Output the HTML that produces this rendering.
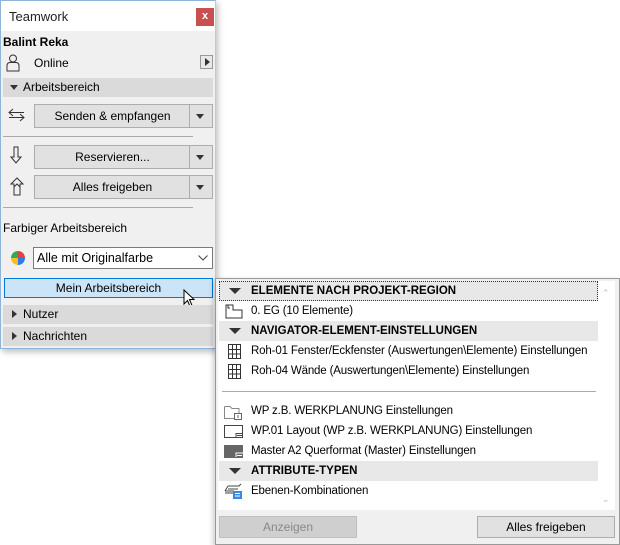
<!DOCTYPE html><html><head><style>
body{margin:0;width:620px;height:545px;background:#fff;font-family:"Liberation Sans",sans-serif;font-size:12px;color:#000;position:relative;overflow:hidden}
.a{position:absolute;white-space:nowrap}
.btn{position:absolute;background:#e1e1e1;border:1px solid #adadad;box-sizing:border-box;text-align:center;line-height:21px}
.dd{position:absolute;right:0;top:0;width:22px;height:100%;border-left:1px solid #adadad}
.dd:after{content:"";position:absolute;left:6px;top:9px;border:4px solid transparent;border-top:5px solid #333}
.bar{position:absolute;left:3px;width:210px;height:19px;background:#dadada;line-height:19px}
.tri{position:absolute;left:7px;top:7px;border:4px solid transparent;border-top:5px solid #333}
.trir{position:absolute;left:9px;top:5px;border:4px solid transparent;border-left:5px solid #333}
.hdr{position:absolute;left:219px;width:379px;height:20px;background:#e8e8e8;font-weight:bold;line-height:20px;white-space:nowrap;font-size:11.5px}
.hdr span,.it span{position:absolute;left:32px}
.hdr .tri{left:10px;top:7px;border-width:5px 6px;border-top-width:6px}
.it{position:absolute;left:219px;width:379px;height:20px;line-height:20px;white-space:nowrap;font-size:11.5px;letter-spacing:-0.15px}
</style></head><body>
<div class="a" style="left:0;top:0;width:216px;height:349px;background:#f0f0f0;border:1px solid #8fb3d9;border-right-color:#c8c8c8;box-sizing:border-box;box-shadow:2px 3px 6px rgba(0,0,0,.25)"></div>
<div class="a" style="left:1px;top:1px;width:214px;height:30px;background:#fff"></div>
<div class="a" style="left:9px;top:9px;font-size:13px;color:#222">Teamwork</div>
<div class="a" style="left:196px;top:8px;width:18px;height:18px;background:#c75050;color:#fff;font-size:11px;text-align:center;line-height:17px;font-weight:bold">x</div>
<div class="a" style="left:3px;top:35px;font-weight:bold">Balint Reka</div>
<svg class="a" style="left:6px;top:54px" width="14" height="18"><circle cx="7" cy="4.5" r="3.5" fill="none" stroke="#333"/><path d="M1 17V12Q1 8.5 4 8.5H10Q13 8.5 13 12V17Z" fill="none" stroke="#333"/></svg>
<div class="a" style="left:34px;top:56px">Online</div>
<div class="a" style="left:200px;top:55px;width:13px;height:14px;border:1px solid #999;background:#e8e8e8;box-sizing:border-box"><div style="position:absolute;left:4px;top:2px;border-width:4px 0 4px 5px;border-style:solid;border-color:transparent transparent transparent #333"></div></div>
<div class="bar" style="top:78px"><div class="tri"></div><span style="margin-left:20px">Arbeitsbereich</span></div>
<svg class="a" style="left:8px;top:107px" width="18" height="16"><path d="M5 2L1 5.5L5 9M1 5.5H16M12 7L16 10.5L12 14M16 10.5H1" fill="none" stroke="#333"/></svg>
<div class="btn" style="left:34px;top:104px;width:179px;height:24px;line-height:22px"><span style="margin-right:22px">Senden &amp; empfangen</span><div class="dd"></div></div>
<div class="a" style="left:3px;top:136px;width:190px;height:1px;background:#aaa"></div>
<svg class="a" style="left:10px;top:146px" width="12" height="18"><path d="M4 1H8V11H11L6 17L1 11H4Z" fill="none" stroke="#333"/></svg>
<div class="btn" style="left:34px;top:145px;width:179px;height:24px;line-height:22px"><span style="margin-right:22px">Reservieren...</span><div class="dd"></div></div>
<svg class="a" style="left:9px;top:177px" width="16" height="19"><path d="M2 7L8 1L14 7H11V18H5V7Z M5 10L8 7L11 10" fill="none" stroke="#333"/></svg>
<div class="btn" style="left:34px;top:175px;width:179px;height:24px;line-height:22px"><span style="margin-right:22px">Alles freigeben</span><div class="dd"></div></div>
<div class="a" style="left:3px;top:207px;width:190px;height:1px;background:#aaa"></div>
<div class="a" style="left:3px;top:221px">Farbiger Arbeitsbereich</div>
<svg class="a" style="left:10px;top:250px" width="16" height="16"><path d="M8 8V1A7 7 0 0 1 15 8Z" fill="#e8413b"/><path d="M8 8H15A7 7 0 0 1 8 15Z" fill="#2a7de1"/><path d="M8 8V15A7 7 0 0 1 1 8Z" fill="#f4c01e"/><path d="M8 8H1A7 7 0 0 1 8 1Z" fill="#34a853"/></svg>
<div class="a" style="left:33px;top:247px;width:180px;height:22px;background:#fff;border:1px solid #7a7a7a;box-sizing:border-box;line-height:20px;padding-left:3px;font-size:12.5px">Alle mit Originalfarbe<svg class="a" style="right:4px;top:7px" width="10" height="6"><path d="M0.5 0.5L5 5L9.5 0.5" fill="none" stroke="#444"/></svg></div>
<div class="a" style="left:4px;top:278px;width:209px;height:20px;background:#cce4f7;border:1px solid #0078d7;box-sizing:border-box;text-align:center;line-height:18px">Mein Arbeitsbereich</div>
<svg class="a" style="left:183px;top:289px" width="13" height="20"><path d="M1 1V15L4.5 11.5L7 17.5L9 16.5L6.5 10.5H11Z" fill="#fff" stroke="#000"/></svg>
<div class="bar" style="top:305px"><div class="trir"></div><span style="margin-left:20px">Nutzer</span></div>
<div class="bar" style="top:327px"><div class="trir"></div><span style="margin-left:20px">Nachrichten</span></div>

<div class="a" style="left:215px;top:278px;width:405px;height:267px;background:#f0f0f0;border:1px solid #999;box-sizing:border-box;box-shadow:-2px 2px 5px rgba(0,0,0,.2)"></div>
<div class="a" style="left:218px;top:281px;width:397px;height:229px;background:#fff"></div>
<div class="hdr" style="top:281px;outline:1px dotted #333;outline-offset:-1px"><div class="tri"></div><span>ELEMENTE NACH PROJEKT-REGION</span></div>
<div class="it" style="top:301px"><svg class="a" style="left:6px;top:3px" width="18" height="15"><path d="M1 1V14H17V6H8V1Z M3 1V4H5" fill="none" stroke="#333"/></svg><span>0. EG (10 Elemente)</span></div>
<div class="hdr" style="top:321px"><div class="tri"></div><span>NAVIGATOR-ELEMENT-EINSTELLUNGEN</span></div>
<div class="it" style="top:341px"><svg class="a" style="left:9px;top:3px" width="13" height="15"><path d="M.5 .5H12.5V14.5H.5ZM4.5 .5V14.5M8.5 .5V14.5M.5 5.5H12.5M.5 10H12.5" fill="none" stroke="#333"/></svg><span>Roh-01 Fenster/Eckfenster (Auswertungen\Elemente) Einstellungen</span></div>
<div class="it" style="top:361px"><svg class="a" style="left:9px;top:3px" width="13" height="15"><path d="M.5 .5H12.5V14.5H.5ZM4.5 .5V14.5M8.5 .5V14.5M.5 5.5H12.5M.5 10H12.5" fill="none" stroke="#333"/></svg><span>Roh-04 Wände (Auswertungen\Elemente) Einstellungen</span></div>
<div class="a" style="left:222px;top:391px;width:374px;height:1px;background:#aaa"></div>
<div class="it" style="top:401px"><svg class="a" style="left:5px;top:3px" width="20" height="16"><path d="M.5 2.5H6L8 4.5H15V9M.5 2.5V14.5H10" fill="none" stroke="#888"/><rect x="10.5" y="9.5" width="7" height="6" fill="#fff" stroke="#666"/><path d="M14 11V14" stroke="#666"/></svg><span>WP z.B. WERKPLANUNG Einstellungen</span></div>
<div class="it" style="top:421px"><svg class="a" style="left:5px;top:4px" width="20" height="13"><rect x=".5" y=".5" width="18" height="12" fill="none" stroke="#444"/><path d="M12 12.5V8.5H18.5M13 10.5H18" stroke="#444" fill="none"/></svg><span>WP.01 Layout (WP z.B. WERKPLANUNG) Einstellungen</span></div>
<div class="it" style="top:441px"><svg class="a" style="left:5px;top:4px" width="20" height="13"><path d="M0 0H19V13H0Z" fill="#666"/><path d="M12 12V8H19M13 10.5H18" stroke="#fff" fill="none"/></svg><span>Master A2 Querformat (Master) Einstellungen</span></div>
<div class="hdr" style="top:461px"><div class="tri"></div><span>ATTRIBUTE-TYPEN</span></div>
<div class="it" style="top:481px"><svg class="a" style="left:5px;top:2px" width="20" height="17"><path d="M4 3H15L17 1M1 8L4 3M1 8H10M1 10H10M4 6H14" stroke="#444" fill="none"/><rect x="9" y="8" width="9" height="8" fill="#3b8ae0"/><path d="M11 10.5H16M11 13H16" stroke="#fff"/></svg><span>Ebenen-Kombinationen</span></div>
<div class="a" style="left:602px;top:288px;color:#bbb;font-size:9px">&#8963;</div>
<div class="a" style="left:602px;top:494px;color:#bbb;font-size:9px">&#8964;</div>
<div class="btn" style="left:219px;top:516px;width:138px;height:22px;background:#cfcfcf;border-color:#bfbfbf;color:#888;line-height:20px">Anzeigen</div>
<div class="btn" style="left:477px;top:516px;width:138px;height:22px;line-height:20px">Alles freigeben</div>
</body></html>
